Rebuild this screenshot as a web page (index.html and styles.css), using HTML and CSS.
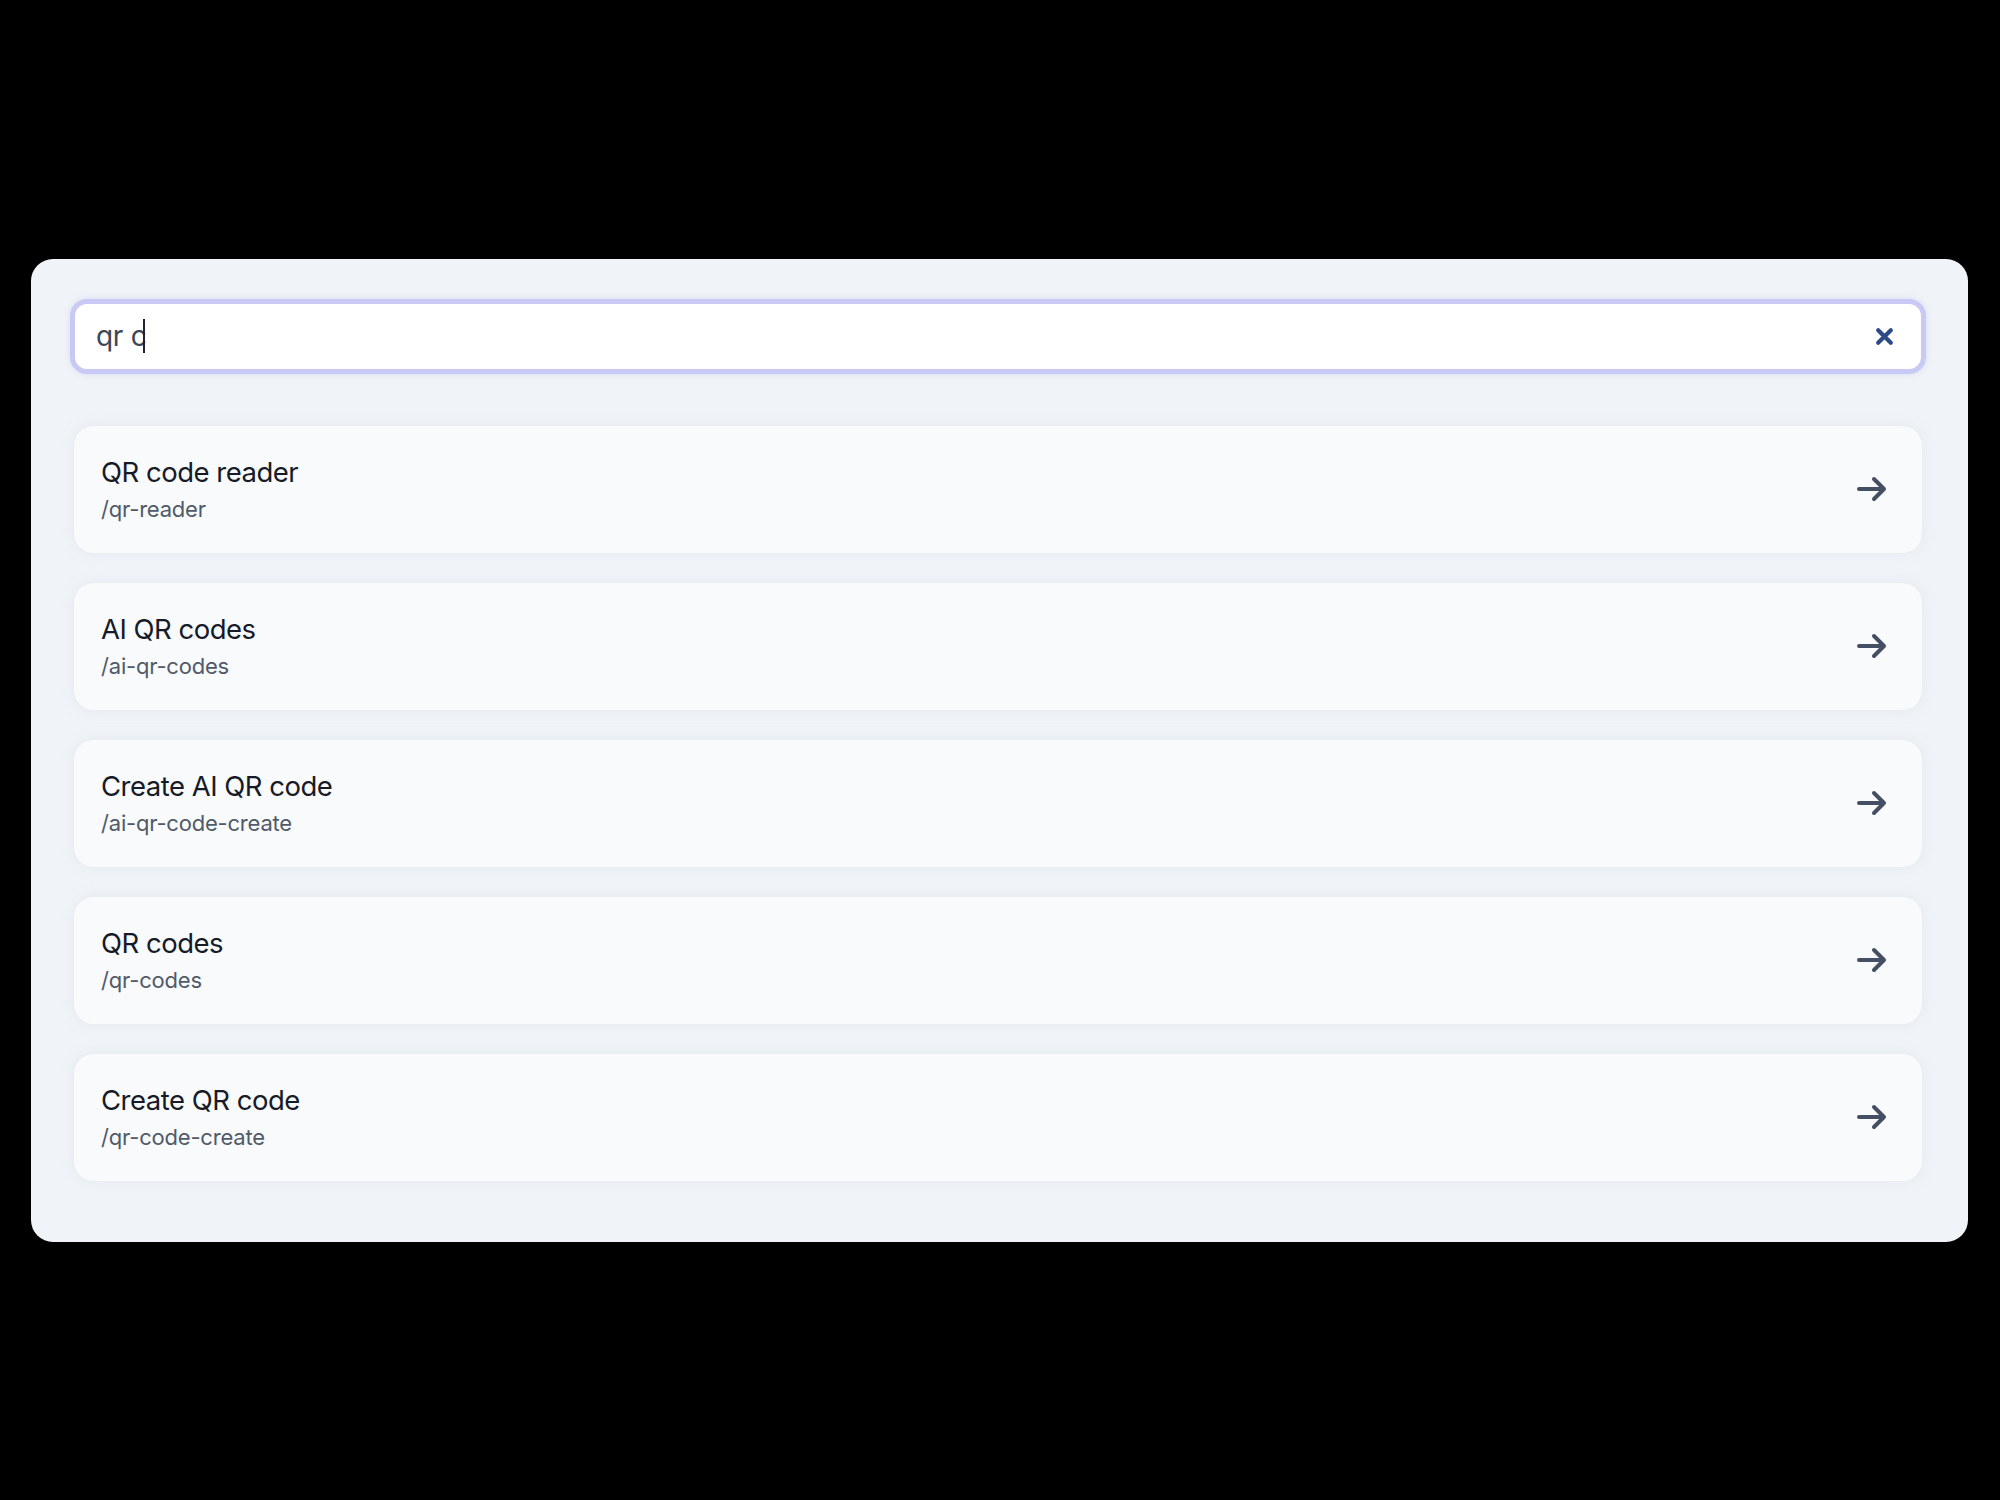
FILE: index.html
```html
<!DOCTYPE html>
<html lang="en">
<head>
<meta charset="utf-8">
<title>Search</title>
<link rel="stylesheet" href="styles.css">
</head>
<body>
<div class="panel">
  <div class="search">
    <div class="query"><span class="qtext">qr c</span><span class="caret"></span></div>
    <svg class="clear" viewBox="0 0 20 20" width="21" height="21" aria-hidden="true">
      <path d="M4 4 L16 16 M16 4 L4 16" stroke="#2d4a87" stroke-width="4" stroke-linecap="round" fill="none"/>
    </svg>
  </div>
  <ul class="results">
    <li class="item">
      <div class="texts"><div class="title">QR code reader</div><div class="path">/qr-reader</div></div>
      <svg class="arrow" viewBox="0 0 32 32" width="32" height="32" aria-hidden="true"><path d="M3 16 H28 M18 6 L28 16 L18 26" stroke="#454f63" stroke-width="4" stroke-linecap="round" stroke-linejoin="round" fill="none"/></svg>
    </li>
    <li class="item">
      <div class="texts"><div class="title">AI QR codes</div><div class="path">/ai-qr-codes</div></div>
      <svg class="arrow" viewBox="0 0 32 32" width="32" height="32" aria-hidden="true"><path d="M3 16 H28 M18 6 L28 16 L18 26" stroke="#454f63" stroke-width="4" stroke-linecap="round" stroke-linejoin="round" fill="none"/></svg>
    </li>
    <li class="item">
      <div class="texts"><div class="title">Create AI QR code</div><div class="path">/ai-qr-code-create</div></div>
      <svg class="arrow" viewBox="0 0 32 32" width="32" height="32" aria-hidden="true"><path d="M3 16 H28 M18 6 L28 16 L18 26" stroke="#454f63" stroke-width="4" stroke-linecap="round" stroke-linejoin="round" fill="none"/></svg>
    </li>
    <li class="item">
      <div class="texts"><div class="title">QR codes</div><div class="path">/qr-codes</div></div>
      <svg class="arrow" viewBox="0 0 32 32" width="32" height="32" aria-hidden="true"><path d="M3 16 H28 M18 6 L28 16 L18 26" stroke="#454f63" stroke-width="4" stroke-linecap="round" stroke-linejoin="round" fill="none"/></svg>
    </li>
    <li class="item">
      <div class="texts"><div class="title">Create QR code</div><div class="path">/qr-code-create</div></div>
      <svg class="arrow" viewBox="0 0 32 32" width="32" height="32" aria-hidden="true"><path d="M3 16 H28 M18 6 L28 16 L18 26" stroke="#454f63" stroke-width="4" stroke-linecap="round" stroke-linejoin="round" fill="none"/></svg>
    </li>
  </ul>
</div>
</body>
</html>
```
FILE: styles.css
```css
html, body {
  margin: 0;
  padding: 0;
  background: #000;
}
body {
  min-height: 100vh;
  display: flex;
  align-items: center;
  justify-content: center;
  font-family: Inter, "Noto Sans", "Liberation Sans", sans-serif;
}
.panel {
  box-sizing: border-box;
  width: 1937px;
  height: 983px;
  margin-left: -1px;
  background: #f0f4f8;
  border-radius: 22px;
  padding: 40px 42px 61px 39px;
  display: flex;
  flex-direction: column;
}
.search {
  box-sizing: border-box;
  height: 75px;
  background: #ffffff;
  border: 5px solid #c8c9f4;
  border-radius: 17px;
  display: flex;
  align-items: center;
  padding: 0 26px 0 21px;
  box-shadow: 0 0 6px rgba(170, 172, 235, 0.35);
}
.query {
  flex: 1;
  display: flex;
  align-items: center;
  color: #3d4656;
  font-size: 28px;
  letter-spacing: -0.3px;
}
.caret {
  display: inline-block;
  width: 2px;
  height: 34px;
  background: #1f2430;
  margin-left: -3px;
}
.clear {
  display: block;
}
.results {
  list-style: none;
  margin: 52px 0 0;
  padding: 0 4px;
  display: flex;
  flex-direction: column;
  gap: 30px;
}
.item {
  box-sizing: border-box;
  height: 127px;
  background: #f8fafc;
  border-radius: 20px;
  box-shadow: 0 0 12px rgba(215, 222, 232, 0.5);
  display: flex;
  align-items: center;
  justify-content: space-between;
  padding: 0 34px 0 27px;
}
.texts {
  display: flex;
  flex-direction: column;
}
.title {
  font-size: 27.5px;
  line-height: 36px;
  font-weight: 400;
  color: #161b27;
  letter-spacing: -0.5px;
}
.path {
  margin-top: 4px;
  font-size: 22px;
  line-height: 30px;
  color: #515a69;
  letter-spacing: -0.2px;
}
.arrow {
  display: block;
}
```
